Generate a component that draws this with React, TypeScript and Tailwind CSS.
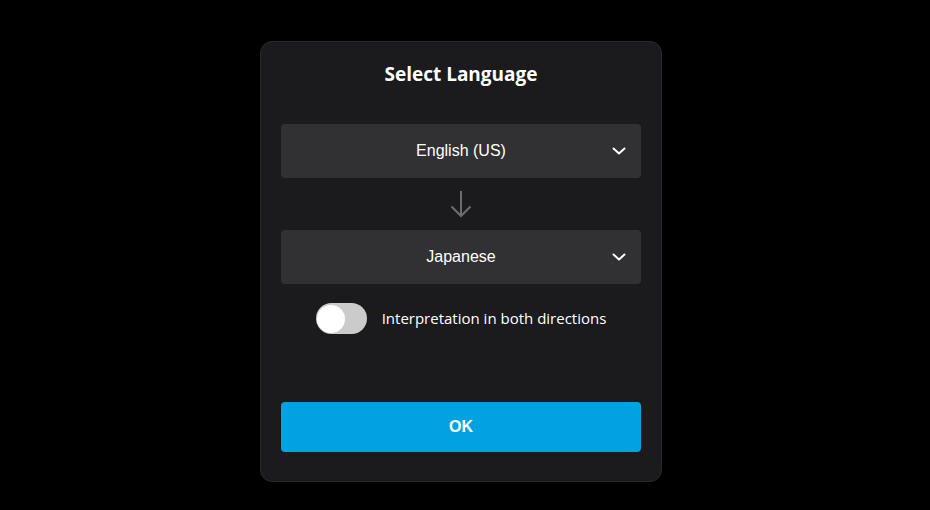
import { useState } from "react"

function Chevron() {
    return (
        <svg width="14" height="8" viewBox="0 0 14 8" fill="none" className="absolute right-[15px] top-1/2 -translate-y-1/2">
            <path d="M1.5 1.5 L7 6.5 L12.5 1.5" stroke="white" strokeWidth="2" strokeLinecap="round" strokeLinejoin="round" />
        </svg>
    )
}

function LanguageSelect({ value }: { value: string }) {
    return (
        <div className="relative flex h-[54px] w-full items-center justify-center rounded-[4px] bg-[#313134] text-[16px] text-white font-['Liberation_Sans',Arial,sans-serif]">
            <span>{value}</span>
            <Chevron />
        </div>
    )
}

export default function App() {
    const [both, setBoth] = useState(false)

    return (
        <div className="flex h-[510px] w-full items-start justify-center bg-black pt-[41px]">
            <div className="mr-[8px] flex h-[441px] w-[402px] flex-col items-stretch rounded-[12px] border border-[#2a2a2d] bg-[#1b1b1d] px-[20px]">
                <h1 className="mt-[18px] text-center text-[19px] font-bold leading-[28px] text-white font-['Open_Sans',sans-serif]">
                    Select Language
                </h1>

                <div className="mt-[36px]">
                    <LanguageSelect value="English (US)" />
                </div>

                <div className="flex h-[52px] items-center justify-center">
                    <svg width="22" height="28" viewBox="0 0 22 28" fill="none">
                        <path d="M11 1 V26 M1.5 16.5 L11 26 L20.5 16.5" stroke="#6d6d70" strokeWidth="2" />
                    </svg>
                </div>

                <LanguageSelect value="Japanese" />

                <div className="mt-[19px] flex items-center justify-center gap-[15px]">
                    <button
                        onClick={() => setBoth(!both)}
                        className={`relative h-[31px] w-[51px] rounded-full ${both ? "bg-[#00a2e0]" : "bg-[#cbcbcb]"}`}
                    >
                        <span
                            className={`absolute top-[1.5px] h-[28px] w-[28px] rounded-full bg-white ${both ? "left-[21.5px]" : "left-[1.5px]"}`}
                        />
                    </button>
                    <span className="text-[15px] text-white font-['Open_Sans',sans-serif]">
                        Interpretation in both directions
                    </span>
                </div>

                <button className="mt-[68px] h-[50px] w-full rounded-[4px] bg-[#00a2e0] text-[16px] font-bold text-white font-['Liberation_Sans',Arial,sans-serif]">
                    OK
                </button>
            </div>
        </div>
    )
}
